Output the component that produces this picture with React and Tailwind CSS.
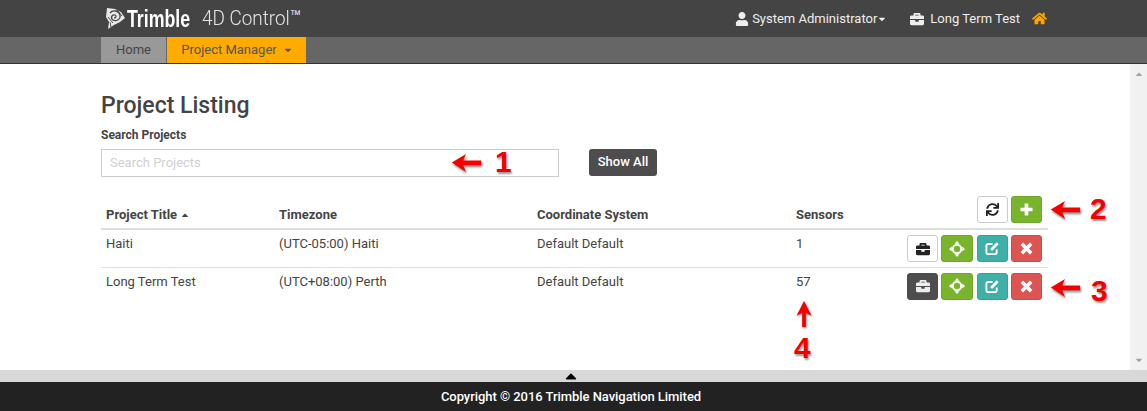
import { FaUser, FaBriefcase, FaHome, FaCaretDown, FaCaretUp, FaSync } from 'react-icons/fa';

const rows = [
  { title: 'Haiti', tz: '(UTC-05:00) Haiti', coord: 'Default Default', sensors: '1', active: false },
  { title: 'Long Term Test', tz: '(UTC+08:00) Perth', coord: 'Default Default', sensors: '57', active: true },
];

const Logo = () => (
  <svg width="20" height="23" viewBox="0 0 20 23" className="shrink-0">
    <path d="M1 1 L9 2 L15 5 L19 11 L14 15 L8 18 L2 22 L3 15 L0 10 Z" fill="#e8e8e8" />
    <path d="M4 6 C7 2 13 4 14 8 C15 12 10 15 7 13 C4 11 6 7 9 8 C11 9 10 11 8 11" fill="none" stroke="#444" strokeWidth="1.3" />
    <path d="M2 10 L7 16 M11 3 L16 9 M4 15 L5 20" stroke="#444" strokeWidth="0.9" />
  </svg>
);

const Arrow = ({ className }) => (
  <svg viewBox="0 0 31 20" className={`w-[31px] h-[19px] drop-shadow-[1px_2px_1px_rgba(0,0,0,0.45)] ${className}`}>
    <path d="M0 10 L15 1 L12 8 L31 8 L31 13 L12 13 L15 20 Z" fill="#f50000" />
  </svg>
);

const Num = ({ children, className }) => (
  <span className={`font-['Liberation_Sans',sans-serif] font-bold text-[30px] leading-none text-[#f50000] [text-shadow:1px_2px_2px_rgba(0,0,0,0.4)] ${className}`}>
    {children}
  </span>
);

const IconBtn = ({ color, children }) => (
  <button className={`h-[27px] rounded-[3px] flex items-center justify-center text-white ${color}`}>
    {children}
  </button>
);

const MoveIcon = () => (
  <svg viewBox="0 0 16 16" className="w-[16px] h-[16px]" fill="white">
    <circle cx="8" cy="8" r="4.2" fill="none" stroke="white" strokeWidth="2" />
    <path d="M8 0 L10.5 2.8 L5.5 2.8 Z M8 16 L10.5 13.2 L5.5 13.2 Z M0 8 L2.8 5.5 L2.8 10.5 Z M16 8 L13.2 5.5 L13.2 10.5 Z" />
  </svg>
);

const EditIcon = () => (
  <svg viewBox="0 0 16 16" className="w-[15px] h-[15px]" fill="none" stroke="white">
    <path d="M12.5 9 V12 A1.8 1.8 0 0 1 10.7 14 H3.3 A1.8 1.8 0 0 1 1.5 12 V5 A1.8 1.8 0 0 1 3.3 3.2 H8" strokeWidth="2" />
    <path d="M6.5 9.5 L13.5 2.5" strokeWidth="3" />
  </svg>
);

const PlusIcon = () => (
  <svg viewBox="0 0 14 14" className="w-[13px] h-[13px]" fill="none" stroke="white" strokeWidth="4">
    <path d="M7 0.5 V13.5 M0.5 7 H13.5" />
  </svg>
);

const CloseIcon = () => (
  <svg viewBox="0 0 14 14" className="w-[13px] h-[13px]" fill="none" stroke="white" strokeWidth="3.8">
    <path d="M2 2 L12 12 M12 2 L2 12" />
  </svg>
);

const RowActions = ({ active }) => (
  <div className="flex gap-[3px] mt-[1px]">
    <IconBtn color={active ? 'w-[31px] bg-[#4d4d4d] border border-[#4d4d4d] !text-[#eee]' : 'w-[31px] bg-white border border-[#ccc] !text-[#222]'}>
      <FaBriefcase className="w-[14px] h-[14px]" />
    </IconBtn>
    <IconBtn color="w-[32px] mr-[1px] bg-[#79b42d] border border-[#6fa529]"><MoveIcon /></IconBtn>
    <IconBtn color="w-[31px] bg-[#3fb0a8] border border-[#38a199]"><EditIcon /></IconBtn>
    <IconBtn color="w-[31px] bg-[#dd5552] border border-[#d04a47]"><CloseIcon /></IconBtn>
  </div>
);

export default function App() {
  return (
    <div className="w-[1147px] h-[411px] flex flex-col overflow-hidden bg-white font-['Roboto',sans-serif] text-[13px] text-[#444]">
      <header className="h-[37px] shrink-0 bg-[#444] flex items-center pl-[106px] pr-[100px] text-white">
        <Logo />
        <span className="ml-[1px] w-[63px] whitespace-nowrap font-['Liberation_Sans',sans-serif] font-bold text-[24px] leading-none scale-x-[0.74] origin-left">Trimble</span>
        <span className="ml-[12px] w-[88px] whitespace-nowrap text-[21px] leading-none font-light text-[#e6e6e6] scale-x-[0.9] origin-left">4D Control</span>
        <span className="text-[18px] leading-none text-[#e6e6e6] -mt-[3px]">™</span>
        <div className="ml-auto flex items-center text-[#eee]">
          <FaUser className="w-[14px] h-[14px]" />
          <span className="ml-[3px]">System Administrator</span>
          <FaCaretDown className="w-[10px] h-[10px]" />
          <FaBriefcase className="ml-[23px] w-[14px] h-[14px]" />
          <span className="ml-[6px]">Long Term Test</span>
          <FaHome className="ml-[12px] w-[15px] h-[15px] text-[#ffa500]" />
        </div>
      </header>

      <nav className="h-[27px] shrink-0 bg-[#666] border-b border-[#333] pl-[101px] flex">
        <a className="w-[65px] bg-[#999] text-[#444] flex items-center justify-center">Home</a>
        <a className="ml-[1px] w-[139px] pl-[1px] bg-[#ffab00] text-[#555] flex items-center justify-center gap-[6px]">
          Project Manager <FaCaretDown className="w-[10px] h-[10px]" />
        </a>
      </nav>

      <div className="flex-1 flex min-h-0">
        <main className="flex-1 pl-[101px] pr-[82px] pt-[27px]">
          <h1 className="text-[23px] leading-[29px] font-medium text-[#444]">Project Listing</h1>
          <label className="block mt-[8px] font-bold text-[12px] leading-[14px]">Search Projects</label>
          <div className="mt-[7px] flex items-start gap-[30px]">
            <div className="relative w-[458px] h-[28px]">
              <input
                placeholder="Search Projects"
                className="w-full h-full border border-[#ccc] px-[8px] pb-[2px] text-[13px] outline-none placeholder:text-[#d0d0d0]"
              />
              <Arrow className="absolute left-[350px] top-[4px]" />
              <Num className="absolute left-[394px] top-[-2px]">1</Num>
            </div>
            <button className="h-[27px] w-[68px] pb-[2px] rounded-[3px] bg-[#4d4d4d] text-white text-[13px] font-medium">Show All</button>
          </div>

          <div className="relative mt-[19px]">
            <div className="flex justify-end gap-[3px] h-[27px] pr-[6px]">
              <IconBtn color="w-[31px] bg-white border border-[#ccc] !text-[#222]"><FaSync className="w-[13px] h-[13px]" /></IconBtn>
              <IconBtn color="w-[31px] bg-[#79b42d] border border-[#6fa529]"><PlusIcon /></IconBtn>
            </div>
            <Arrow className="absolute left-[949px] top-[4px]" />
            <Num className="absolute left-[989px] top-[-2px]">2</Num>

            <table className="w-[947px] table-fixed border-collapse -mt-[22px]">
              <thead>
                <tr className="border-b-[2px] border-[#ddd] h-[28px] text-left font-bold text-[13px]">
                  <th className="w-[173px] pl-[5px] font-bold">
                    <span className="inline-flex items-center gap-[3px]">Project Title <FaCaretUp className="w-[10px] h-[10px]" /></span>
                  </th>
                  <th className="w-[258px] pl-[5px] font-bold">Timezone</th>
                  <th className="w-[259px] pl-[5px] font-bold">Coordinate System</th>
                  <th className="pl-[5px] font-bold">Sensors</th>
                </tr>
              </thead>
              <tbody>
                {rows.map((r) => (
                  <tr key={r.title} className="h-[38px] border-b border-[#ddd] last:border-b-0 align-top">
                    <td className="pl-[5px] pt-[4px]">{r.title}</td>
                    <td className="pl-[5px] pt-[4px]">{r.tz}</td>
                    <td className="pl-[5px] pt-[4px]">{r.coord}</td>
                    <td className="pl-[5px] pt-[4px]">
                      <div className="flex justify-between">
                        <span>{r.sensors}</span>
                        <div className="pr-[6px]"><RowActions active={r.active} /></div>
                      </div>
                    </td>
                  </tr>
                ))}
              </tbody>
            </table>
            <Arrow className="absolute left-[949px] top-[82px]" />
            <Num className="absolute left-[990px] top-[80px]">3</Num>
            <svg width="18" height="28" viewBox="0 0 18 30" className="absolute left-[694px] top-[104px] drop-shadow-[1px_1px_1px_rgba(0,0,0,0.45)]">
              <path d="M9 1 L17 17 L11 14 L11 29 L7 29 L7 14 L1 17 Z" fill="#f50000" />
            </svg>
            <Num className="absolute left-[693px] top-[137px]">4</Num>
          </div>
        </main>
        <aside className="w-[17px] bg-[#f1f1f1] flex flex-col justify-between items-center py-[5px] text-[#a3a3a3]">
          <FaCaretUp className="w-[10px] h-[10px]" />
          <FaCaretDown className="w-[10px] h-[10px]" />
        </aside>
      </div>

      <div className="h-[12px] shrink-0 bg-[#d8d8d8] flex justify-center pr-[5px]">
        <FaCaretUp className="w-[18px] h-[18px] -mt-[3px] text-black" />
      </div>
      <footer className="h-[29px] shrink-0 bg-[#222] text-white font-medium tracking-[-0.05px] flex items-center justify-center pr-[5px]">
        Copyright © 2016 Trimble Navigation Limited
      </footer>
    </div>
  );
}
